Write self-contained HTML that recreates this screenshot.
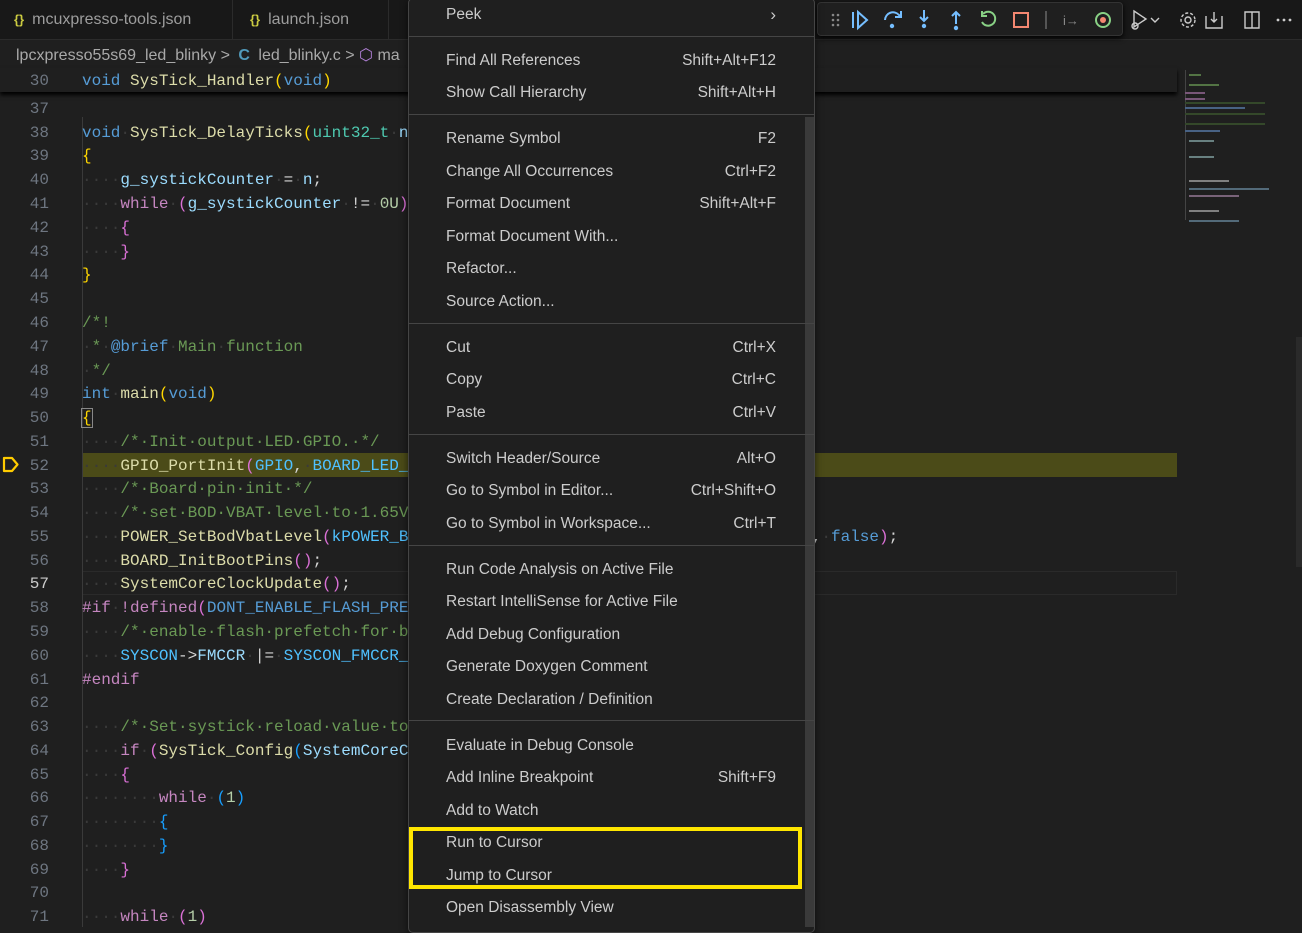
<!DOCTYPE html>
<html><head><meta charset="utf-8"><style>
*{margin:0;padding:0;box-sizing:border-box}
body{width:1302px;height:927px;background:#1f1f1f;overflow:hidden;position:relative;font-family:"Liberation Sans",sans-serif}
.tabs{position:absolute;left:0;top:0;width:1302px;height:40px;background:#181818;border-bottom:1px solid #2b2b2b}
.tab{position:absolute;top:0;height:40px;border-right:1px solid #2b2b2b;color:#9d9d9d;font-size:16px;line-height:40px}
.tab i{font-style:normal;color:#cbcb41;font-weight:bold;font-size:13px;margin-right:8px}
.bc{position:absolute;top:44px;height:24px;font-size:16px;color:#a9a9a9;line-height:24px;left:16px;white-space:nowrap}
.ln{position:absolute;left:0;width:49px;text-align:right;color:#6e7681;font-family:"Liberation Mono",monospace;font-size:16px;height:24px;line-height:26px}
.tx{position:absolute;left:82px;height:24px;line-height:26px;color:#d4d4d4;font-family:"Liberation Mono",monospace;font-size:16px;white-space:pre}
.k{color:#569cd6}.f{color:#dcdcaa}.c{color:#6a9955}.p{color:#c586c0}.v{color:#9cdcfe}.n{color:#b5cea8}.t{color:#4ec9b0}.m{color:#4fc1ff}
.g{color:#ffd700}.pk{color:#da70d6}.bl{color:#179fff}.w{color:#3a3a3a}
.menu{position:absolute;left:408px;top:-2px;width:407px;height:935px;background:#1f1f1f;border:1px solid #454545;border-radius:5px;box-shadow:0 2px 8px rgba(0,0,0,.6);z-index:5}
.mi{position:absolute;left:446px;width:330px;font-size:15.5px;color:#cccccc;height:22px;line-height:24px;z-index:6}
.mi span{position:absolute;right:0;top:0}
.sep{position:absolute;left:409px;width:405px;height:1px;background:#454545;z-index:6}
</style></head><body>
<div class="tabs">
<div class="tab" style="left:0;width:233px;padding-left:14px"><i>{}</i>mcuxpresso-tools.json</div>
<div class="tab" style="left:233px;width:156px;padding-left:17px"><i>{}</i>launch.json</div>
</div>
<div class="bc">lpcxpresso55s69_led_blinky <span style="color:#aaa">&gt;</span> <b style="color:#519aba;margin:0 4px">C</b> led_blinky.c <span>&gt;</span> <span style="color:#b180d7">⬡</span> ma</div>

<div style="position:absolute;left:82px;top:453px;width:1095px;height:24px;background:#4b4b18"></div>
<div style="position:absolute;left:82px;top:571px;width:1095px;height:24px;border:1px solid #2a2a2a"></div>
<div style="position:absolute;left:82px;top:117px;width:1px;height:810px;background:#3a3a3a"></div>

<div style="position:absolute;left:0;top:68px;width:1177px;height:24px;background:#1f1f1f;box-shadow:0 3px 4px #000;z-index:1"></div>
<div class="ln" style="top:68px;z-index:2">30</div>
<div class="tx" style="top:68px;z-index:2"><span class="k">void</span> <span class="f">SysTick_Handler</span><span class="g">(</span><span class="k">void</span><span class="g">)</span></div>

<div class="ln" style="top:96px">37</div>
<div class="ln" style="top:120px">38</div><div class="tx" style="top:120px"><span class="k">void</span><span class="w">·</span><span class="f">SysTick_DelayTicks</span><span class="g">(</span><span class="t">uint32_t</span><span class="w">·</span><span class="v">n</span><span class="g">)</span></div>
<div class="ln" style="top:143px">39</div><div class="tx" style="top:143px"><span class="g">{</span></div>
<div class="ln" style="top:167px">40</div><div class="tx" style="top:167px"><span class="w">····</span><span class="v">g_systickCounter</span><span class="w">·</span>=<span class="w">·</span><span class="v">n</span>;</div>
<div class="ln" style="top:191px">41</div><div class="tx" style="top:191px"><span class="w">····</span><span class="p">while</span><span class="w">·</span><span class="pk">(</span><span class="v">g_systickCounter</span><span class="w">·</span>!=<span class="w">·</span><span class="n">0U</span><span class="pk">)</span></div>
<div class="ln" style="top:215px">42</div><div class="tx" style="top:215px"><span class="w">····</span><span class="pk">{</span></div>
<div class="ln" style="top:239px">43</div><div class="tx" style="top:239px"><span class="w">····</span><span class="pk">}</span></div>
<div class="ln" style="top:262px">44</div><div class="tx" style="top:262px"><span class="g">}</span></div>
<div class="ln" style="top:286px">45</div>
<div class="ln" style="top:310px">46</div><div class="tx" style="top:310px"><span class="c">/*!</span></div>
<div class="ln" style="top:334px">47</div><div class="tx" style="top:334px"><span class="w">·</span><span class="c">*</span><span class="w">·</span><span class="k">@brief</span><span class="w">·</span><span class="c">Main</span><span class="w">·</span><span class="c">function</span></div>
<div class="ln" style="top:358px">48</div><div class="tx" style="top:358px"><span class="w">·</span><span class="c">*/</span></div>
<div class="ln" style="top:381px">49</div><div class="tx" style="top:381px"><span class="k">int</span><span class="w">·</span><span class="f">main</span><span class="g">(</span><span class="k">void</span><span class="g">)</span></div>
<div class="ln" style="top:405px">50</div><div class="tx" style="top:405px"><span class="g" style="outline:1px solid #888">{</span></div>
<div class="ln" style="top:429px">51</div><div class="tx" style="top:429px"><span class="w">····</span><span class="c">/*·Init·output·LED·GPIO.·*/</span></div>
<div class="ln" style="top:453px">52</div><div class="tx" style="top:453px"><span class="w">····</span><span class="f">GPIO_PortInit</span><span class="pk">(</span><span class="m">GPIO</span>,<span class="w">·</span><span class="m">BOARD_LED_PORT</span><span class="pk">)</span>;</div>
<div class="ln" style="top:476px">53</div><div class="tx" style="top:476px"><span class="w">····</span><span class="c">/*·Board·pin·init·*/</span></div>
<div class="ln" style="top:500px">54</div><div class="tx" style="top:500px"><span class="w">····</span><span class="c">/*·set·BOD·VBAT·level·to·1.65V·*/</span></div>
<div class="ln" style="top:524px">55</div><div class="tx" style="top:524px"><span class="w">····</span><span class="f">POWER_SetBodVbatLevel</span><span class="pk">(</span><span class="m">kPOWER_BodVbatLevel1650mv</span>,<span class="w">·</span><span class="m">kPOWER_BodHystLevel50mv</span>,<span class="w">·</span><span class="k">false</span><span class="pk">)</span>;</div>
<div class="ln" style="top:548px">56</div><div class="tx" style="top:548px"><span class="w">····</span><span class="f">BOARD_InitBootPins</span><span class="pk">()</span>;</div>
<div class="ln" style="top:571px;color:#cccccc">57</div><div class="tx" style="top:571px"><span class="w">····</span><span class="f">SystemCoreClockUpdate</span><span class="pk">()</span>;</div>
<div class="ln" style="top:595px">58</div><div class="tx" style="top:595px"><span class="p">#if</span><span class="w">·</span><span class="p">!defined</span><span class="pk">(</span><span class="k">DONT_ENABLE_FLASH_PREFETCH</span><span class="pk">)</span></div>
<div class="ln" style="top:619px">59</div><div class="tx" style="top:619px"><span class="w">····</span><span class="c">/*·enable·flash·prefetch·for·better·performance·*/</span></div>
<div class="ln" style="top:643px">60</div><div class="tx" style="top:643px"><span class="w">····</span><span class="m">SYSCON</span>-&gt;<span class="v">FMCCR</span><span class="w">·</span>|=<span class="w">·</span><span class="m">SYSCON_FMCCR_PREFEN_MASK</span>;</div>
<div class="ln" style="top:667px">61</div><div class="tx" style="top:667px"><span class="p">#endif</span></div>
<div class="ln" style="top:690px">62</div>
<div class="ln" style="top:714px">63</div><div class="tx" style="top:714px"><span class="w">····</span><span class="c">/*·Set·systick·reload·value·to·1ms·*/</span></div>
<div class="ln" style="top:738px">64</div><div class="tx" style="top:738px"><span class="w">····</span><span class="p">if</span><span class="w">·</span><span class="pk">(</span><span class="f">SysTick_Config</span><span class="bl">(</span><span class="v">SystemCoreClock</span><span class="w">·</span>/<span class="w">·</span><span class="n">1000U</span><span class="bl">)</span><span class="pk">)</span></div>
<div class="ln" style="top:762px">65</div><div class="tx" style="top:762px"><span class="w">····</span><span class="pk">{</span></div>
<div class="ln" style="top:785px">66</div><div class="tx" style="top:785px"><span class="w">········</span><span class="p">while</span><span class="w">·</span><span class="bl">(</span><span class="n">1</span><span class="bl">)</span></div>
<div class="ln" style="top:809px">67</div><div class="tx" style="top:809px"><span class="w">········</span><span class="bl">{</span></div>
<div class="ln" style="top:833px">68</div><div class="tx" style="top:833px"><span class="w">········</span><span class="bl">}</span></div>
<div class="ln" style="top:857px">69</div><div class="tx" style="top:857px"><span class="w">····</span><span class="pk">}</span></div>
<div class="ln" style="top:880px">70</div>
<div class="ln" style="top:904px">71</div><div class="tx" style="top:904px"><span class="w">····</span><span class="p">while</span><span class="w">·</span><span class="pk">(</span><span class="n">1</span><span class="pk">)</span></div>

<svg style="position:absolute;left:2px;top:456px" width="18" height="17" viewBox="0 0 18 17"><path d="M2 2 H10 L15.5 8.5 L10 15 H2 Z" fill="none" stroke="#ffcc00" stroke-width="2.2" stroke-linejoin="round"/></svg>

<div style="position:absolute;left:1185px;top:70px;width:80px;height:160px;opacity:.7">
<div style="position:absolute;left:0;top:0;width:1px;height:150px;background:#555"></div>
<div style="position:absolute;left:4px;top:4px;width:12px;height:2px;background:#6a9955"></div>
<div style="position:absolute;left:4px;top:14px;width:30px;height:2px;background:#6a9955"></div>
<div style="position:absolute;left:0;top:22px;width:20px;height:2px;background:#a070a0"></div>
<div style="position:absolute;left:0;top:28px;width:20px;height:2px;background:#a070a0"></div>
<div style="position:absolute;left:0;top:32px;width:80px;height:2px;background:#3e5a30"></div>
<div style="position:absolute;left:0;top:37px;width:60px;height:2px;background:#5a7fb0"></div>
<div style="position:absolute;left:0;top:43px;width:80px;height:2px;background:#3e5a30"></div>
<div style="position:absolute;left:0;top:53px;width:80px;height:2px;background:#3e5a30"></div>
<div style="position:absolute;left:0;top:60px;width:35px;height:2px;background:#5a7fb0"></div>
<div style="position:absolute;left:4px;top:70px;width:25px;height:2px;background:#8aa"></div>
<div style="position:absolute;left:4px;top:86px;width:25px;height:2px;background:#8aa"></div>
<div style="position:absolute;left:4px;top:110px;width:40px;height:2px;background:#aaa"></div>
<div style="position:absolute;left:4px;top:118px;width:80px;height:2px;background:#6a8aa0"></div>
<div style="position:absolute;left:4px;top:125px;width:50px;height:2px;background:#a080a0"></div>
<div style="position:absolute;left:4px;top:140px;width:30px;height:2px;background:#aaa"></div>
<div style="position:absolute;left:4px;top:150px;width:50px;height:2px;background:#6a8aa0"></div>
</div>
<div style="position:absolute;left:1296px;top:337px;width:6px;height:230px;background:#2a2a2a"></div>

<div style="position:absolute;left:817px;top:2px;width:306px;height:34px;background:#1f1f1f;border:1px solid #333;border-radius:4px;box-shadow:0 2px 6px #000"></div>
<svg style="position:absolute;left:817px;top:2px" width="306" height="34">
<g fill="#888"><circle cx="16" cy="13" r="1.3"/><circle cx="21" cy="13" r="1.3"/><circle cx="16" cy="18" r="1.3"/><circle cx="21" cy="18" r="1.3"/><circle cx="16" cy="23" r="1.3"/><circle cx="21" cy="23" r="1.3"/></g>
<g stroke="#75beff" stroke-width="2" fill="none"><path d="M36 10v16M41 10l9 8-9 8z"/><path d="M68 18a8 8 0 0 1 14-5l1 1M84 9v6h-6"/><path d="M107 8v11M103 15l4 4 4-4"/><path d="M139 22V10M135 14l4-4 4 4"/></g>
<g fill="#75beff"><circle cx="75" cy="24" r="2.2"/><circle cx="107" cy="24" r="2.2"/><circle cx="139" cy="26" r="2.2"/></g>
<path d="M166 12a7 7 0 1 1-1 8M165 9v5h5" stroke="#89d185" stroke-width="2" fill="none"/>
<rect x="197" y="11" width="14" height="14" stroke="#f48771" stroke-width="2" fill="none"/>
<path d="M229 9v18" stroke="#555" stroke-width="2"/>
<text x="246" y="23" fill="#888" font-size="13" font-family="Liberation Sans">i→</text>
<circle cx="286" cy="18" r="7" stroke="#89d185" stroke-width="2" fill="none"/><circle cx="286" cy="18" r="3" fill="#f48771"/>
</svg>
<svg style="position:absolute;left:1126px;top:6px" width="176" height="30" fill="none" stroke="#ccc" stroke-width="1.4">
<path d="M8 5l12 8-12 8z"/><circle cx="9" cy="20" r="3"/><path d="M25 12l4 4 4-4"/>
<circle cx="62" cy="14" r="3"/><circle cx="62" cy="14" r="7" stroke-dasharray="3 2"/>
<path d="M88 6v10M85 13l3 3 3-3M80 10v12h16V10"/><path d="M119 6h14v16h-14zM126 6v16"/>
<g fill="#ccc" stroke="none"><circle cx="152" cy="14" r="1.4"/><circle cx="158" cy="14" r="1.4"/><circle cx="164" cy="14" r="1.4"/></g>
</svg>

<div class="menu"></div>
<div style="position:absolute;left:805px;top:117px;width:9px;height:810px;background:#3a3a3a;z-index:6"></div>
<div class="mi" style="top:3px">Peek<span style="font-size:17px">›</span></div>
<div class="sep" style="top:36px"></div>
<div class="mi" style="top:49px">Find All References<span>Shift+Alt+F12</span></div>
<div class="mi" style="top:81px">Show Call Hierarchy<span>Shift+Alt+H</span></div>
<div class="sep" style="top:114px"></div>
<div class="mi" style="top:127px">Rename Symbol<span>F2</span></div>
<div class="mi" style="top:160px">Change All Occurrences<span>Ctrl+F2</span></div>
<div class="mi" style="top:192px">Format Document<span>Shift+Alt+F</span></div>
<div class="mi" style="top:225px">Format Document With...</div>
<div class="mi" style="top:257px">Refactor...</div>
<div class="mi" style="top:290px">Source Action...</div>
<div class="sep" style="top:323px"></div>
<div class="mi" style="top:336px">Cut<span>Ctrl+X</span></div>
<div class="mi" style="top:368px">Copy<span>Ctrl+C</span></div>
<div class="mi" style="top:401px">Paste<span>Ctrl+V</span></div>
<div class="sep" style="top:434px"></div>
<div class="mi" style="top:447px">Switch Header/Source<span>Alt+O</span></div>
<div class="mi" style="top:479px">Go to Symbol in Editor...<span>Ctrl+Shift+O</span></div>
<div class="mi" style="top:512px">Go to Symbol in Workspace...<span>Ctrl+T</span></div>
<div class="sep" style="top:545px"></div>
<div class="mi" style="top:558px">Run Code Analysis on Active File</div>
<div class="mi" style="top:590px">Restart IntelliSense for Active File</div>
<div class="mi" style="top:623px">Add Debug Configuration</div>
<div class="mi" style="top:655px">Generate Doxygen Comment</div>
<div class="mi" style="top:688px">Create Declaration / Definition</div>
<div class="sep" style="top:720px"></div>
<div class="mi" style="top:734px">Evaluate in Debug Console</div>
<div class="mi" style="top:766px">Add Inline Breakpoint<span>Shift+F9</span></div>
<div class="mi" style="top:799px">Add to Watch</div>
<div class="mi" style="top:831px">Run to Cursor</div>
<div class="mi" style="top:864px">Jump to Cursor</div>
<div class="mi" style="top:896px">Open Disassembly View</div>
<div style="position:absolute;left:409px;top:827px;width:393px;height:62px;border:4px solid #ffe600;z-index:7"></div>
</body></html>
